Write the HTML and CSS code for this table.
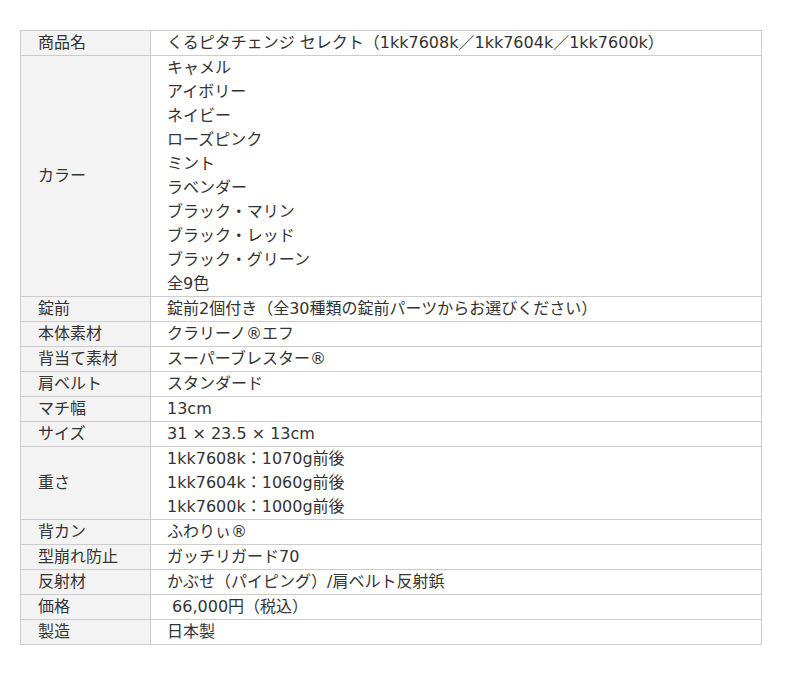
FILE: index.html
```html
<!DOCTYPE html>
<html lang="ja">
<head>
<meta charset="utf-8">
<link rel="stylesheet" href="styles.css">
</head>
<body>
<div class="wrap">
<table class="spec">
<tr><th>商品名</th><td>くるピタチェンジ セレクト（1kk7608k／1kk7604k／1kk7600k）</td></tr>
<tr><th>カラー</th><td>キャメル<br>アイボリー<br>ネイビー<br>ローズピンク<br>ミント<br>ラベンダー<br>ブラック・マリン<br>ブラック・レッド<br>ブラック・グリーン<br>全9色</td></tr>
<tr><th>錠前</th><td>錠前2個付き（全30種類の錠前パーツからお選びください）</td></tr>
<tr><th>本体素材</th><td>クラリーノ®エフ</td></tr>
<tr><th>背当て素材</th><td>スーパーブレスター®</td></tr>
<tr><th>肩ベルト</th><td>スタンダード</td></tr>
<tr><th>マチ幅</th><td>13cm</td></tr>
<tr><th>サイズ</th><td>31 × 23.5 × 13cm</td></tr>
<tr><th>重さ</th><td>1kk7608k：1070g前後<br>1kk7604k：1060g前後<br>1kk7600k：1000g前後</td></tr>
<tr><th>背カン</th><td>ふわりぃ®</td></tr>
<tr><th>型崩れ防止</th><td>ガッチリガード70</td></tr>
<tr><th>反射材</th><td>かぶせ（パイピング）/肩ベルト反射鋲</td></tr>
<tr><th>価格</th><td>&nbsp;66,000円（税込）</td></tr>
<tr><th>製造</th><td>日本製</td></tr>
</table>
</div>
</body>
</html>
```
FILE: styles.css
```css
html, body {
  margin: 0;
  padding: 0;
  background: #fff;
}
.wrap {
  padding: 30px 0 0 20px;
}
.spec {
  border-collapse: collapse;
  width: 742px;
  font-family: "DejaVu Sans", "Noto Sans CJK JP", sans-serif;
  font-size: 16px;
  line-height: 24px;
  color: #333;
}
.spec th, .spec td {
  border: 1px solid #ccc;
  padding: 0 16px;
  text-align: left;
  font-weight: normal;
  vertical-align: middle;
}
.spec th {
  width: 96px;
  padding-left: 17px;
  background: #f3f3f3;
}
```
